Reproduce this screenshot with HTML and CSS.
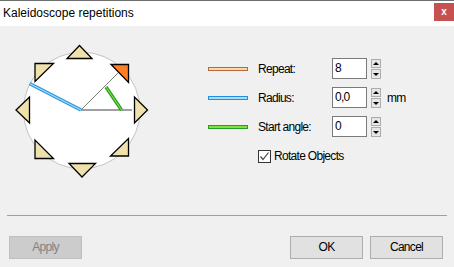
FILE: index.html
```html
<!DOCTYPE html>
<html lang="en">
<head>
    <meta charset="UTF-8">
    <title>Kaleidoscope repetitions</title>
    <link rel="stylesheet" href="styles.css">
</head>
<body>
    <div class="window">

        <!-- title bar -->
        <div class="title-bar">
            <div class="title-text">Kaleidoscope repetitions</div>
            <div class="close-btn">x</div>
        </div>

        <div class="main">
            <!-- preview of the repetitions -->
            <svg class="preview" width="165" height="189" viewBox="0 26 165 189">
                <circle cx="81.7" cy="110.5" r="58.3" fill="#fff" stroke="#c3c3c3" stroke-width="1"/>
                <g fill="#efe1ab" stroke="#000" stroke-width="1.3" stroke-linejoin="miter">
                    <polygon points="67,58.5 92,58.5 79.5,45.5"/>
                    <polygon points="35,63.5 53.5,63.5 35,81.5"/>
                    <polygon points="29.5,97 29.5,123 16,110"/>
                    <polygon points="35,140 35,158.5 53.5,158.5"/>
                    <polygon points="69,163.5 95.5,163.5 82,177"/>
                    <polygon points="128.5,138.5 128.5,156 110.5,156"/>
                    <polygon points="134.5,97 134.5,123 147.5,110"/>
                    <polygon points="111,64.5 128.5,64.5 128.5,82.5" fill="#ff7f27"/>
                </g>
                <line x1="81" y1="110" x2="118" y2="73" stroke="#7a7a7a" stroke-width="1"/>
                <line x1="81" y1="110" x2="132" y2="110" stroke="#808080" stroke-width="1.5"/>
                <line x1="29.5" y1="83.5" x2="81" y2="110" stroke="#2a98dc" stroke-width="3.6"/>
                <line x1="29.5" y1="83.5" x2="81" y2="110" stroke="#9fdcff" stroke-width="1.4"/>
                <line x1="106" y1="87" x2="121.5" y2="110" stroke="#229922" stroke-width="3.4"/>
                <line x1="106" y1="87" x2="121.5" y2="110" stroke="#80e23c" stroke-width="1.2"/>
            </svg>

            <!-- settings -->
            <div class="form">
                <div class="row">
                    <div class="legend legend-repeat"></div>
                    <div class="label">Repeat:</div>
                    <div class="input">8</div>
                    <div class="spin"><div class="spin-up"></div><div class="spin-down"></div></div>
                </div>
                <div class="row">
                    <div class="legend legend-radius"></div>
                    <div class="label">Radius:</div>
                    <div class="input">0,0</div>
                    <div class="spin"><div class="spin-up"></div><div class="spin-down"></div></div>
                    <div class="unit">mm</div>
                </div>
                <div class="row">
                    <div class="legend legend-angle"></div>
                    <div class="label">Start angle:</div>
                    <div class="input">0</div>
                    <div class="spin"><div class="spin-up"></div><div class="spin-down"></div></div>
                </div>
                <div class="check-row">
                    <div class="checkbox">
                        <svg width="11" height="11" viewBox="0 0 11 11">
                            <polyline points="1.5,5.5 4,8.5 9.5,1.5" fill="none" stroke="#444" stroke-width="1.2"/>
                        </svg>
                    </div>
                    <div class="check-label">Rotate Objects</div>
                </div>
            </div>
        </div>

        <div class="separator"></div>

        <!-- buttons -->
        <div class="buttons">
            <div class="btn btn-disabled">Apply</div>
            <div class="spacer"></div>
            <div class="btn">OK</div>
            <div class="btn">Cancel</div>
        </div>
    </div>
</body>
</html>
```

FILE: styles.css
```css
body, html {
    margin: 0;
    padding: 0;
    width: 454px;
    height: 267px;
    overflow: hidden;
    background-color: #f0f0f0;
    font-family: 'Liberation Sans', Arial, sans-serif;
    font-size: 12px;
    letter-spacing: -0.7px; /* narrow dialog font */
    color: #000;
}

.window {
    width: 454px;
    height: 267px;
    display: flex;
    flex-direction: column;
}

/* title bar */
.title-bar {
    height: 25px;
    background-color: #fff;
    border-top: 1px solid #6e6e6e;
    display: flex;
    align-items: flex-start;
    justify-content: space-between;
}

.title-text {
    font-size: 12px;
    letter-spacing: 0;
    padding: 5px 0 0 3px;
}

.close-btn {
    width: 20px;
    height: 18px;
    margin-top: 2px;
    background-color: #c75050;
    color: #fff;
    font-size: 10px;
    font-weight: bold;
    letter-spacing: 0;
    line-height: 17px;
    text-align: center;
}

.main {
    height: 189px;
    display: flex;
}

.form {
    margin-left: 43px;
    padding-top: 32px;
    display: flex;
    flex-direction: column;
    gap: 8px;
}

.row {
    height: 21px;
    display: flex;
    align-items: center;
}

.legend {
    width: 38px;
    height: 2px;
    margin-right: 10px;
}

.legend-repeat {
    background-color: #f8d9a8;
    border: 1px solid #b8693b;
}

.legend-radius {
    background-color: #a8dcff;
    border: 1px solid #2290e0;
}

.legend-angle {
    background-color: #86de3c;
    border: 1px solid #25a025;
}

.label {
    width: 74px;
    padding-top: 1px;
}

.input {
    width: 31px;
    height: 19px;
    border: 1px solid #7a7a7a;
    background-color: #fff;
    padding-left: 2px;
    line-height: 19px;
}

.spin {
    margin-left: 4px;
    height: 20px;
    display: flex;
    flex-direction: column;
    gap: 1px;
}

.spin-up, .spin-down {
    width: 8px;
    height: 8px;
    border: 1px solid #adadad;
    background-color: #e6e6e6;
    position: relative;
}

.spin-up::after, .spin-down::after {
    content: '';
    position: absolute;
    left: 1px;
    border-left: 3px solid transparent;
    border-right: 3px solid transparent;
}

.spin-up::after {
    top: 2px;
    border-bottom: 3px solid #000;
}

.spin-down::after {
    top: 3px;
    border-top: 3px solid #000;
}

.unit {
    margin-left: 6px;
}

.check-row {
    margin-top: 4px;
    margin-left: 50px;
    display: flex;
    align-items: center;
    gap: 3px;
}

.checkbox {
    width: 11px;
    height: 11px;
    border: 1px solid #333;
    background-color: #fff;
    display: flex;
}

.separator {
    margin: 0 7px;
    height: 1px;
    background-color: #a0a0a0;
}

.buttons {
    margin-top: 20px;
    padding: 0 11px 0 9px;
    display: flex;
    gap: 7px;
}

.spacer {
    flex: 1;
}

.btn {
    width: 71px;
    height: 21px;
    border: 1px solid #adadad;
    background-color: #e1e1e1;
    text-align: center;
    line-height: 21px;
}

.btn-disabled {
    background-color: #cccccc;
    border-color: #bfbfbf;
    color: #838383;
}
```
